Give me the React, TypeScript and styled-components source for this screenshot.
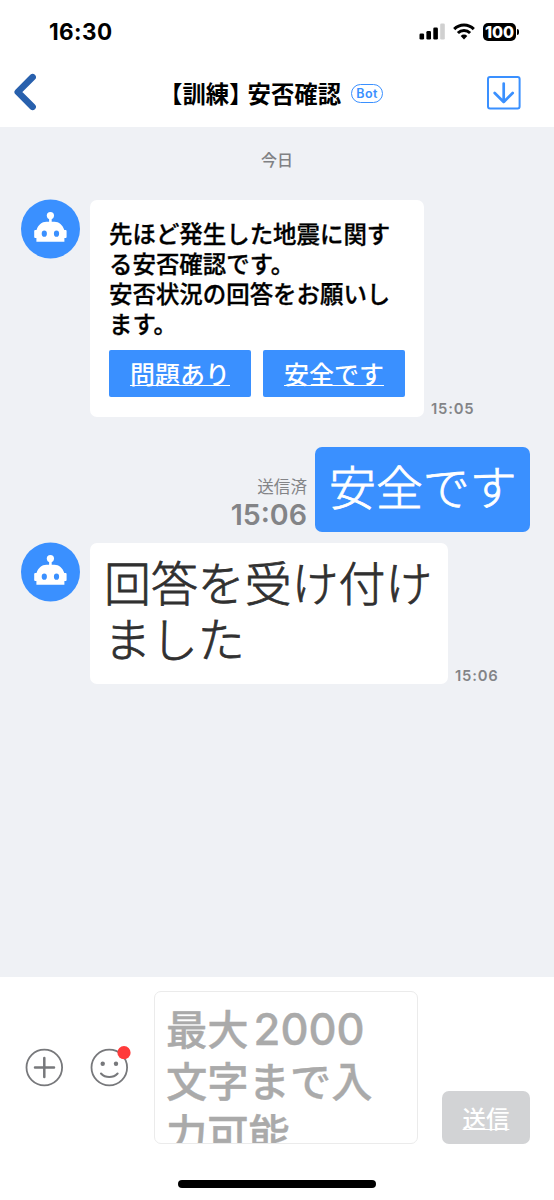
import React from "react";
import styled, { createGlobalStyle } from "styled-components";

const GlobalStyle = createGlobalStyle`
  * { box-sizing: border-box; }
  body {
    margin: 0;
    background: #fff;
    font-family: Inter, "Noto Sans CJK JP", sans-serif;
    color: #000;
  }
`;

const BLUE = "#3a90ff";

const Screen = styled.div`
  width: 554px;
  height: 1200px;
  display: flex;
  flex-direction: column;
  overflow: hidden;
  background: #fff;
`;

const StatusBar = styled.div`
  height: 61px;
  flex: none;
  display: flex;
  justify-content: space-between;
  align-items: center;
  padding: 2px 35px 0 49px;
`;

const Clock = styled.div`
  font-size: 22.5px;
  font-weight: 700;
  line-height: 24px;
  letter-spacing: 0.4px;
`;

const StatusIcons = styled.div`
  display: flex;
  align-items: center;
  gap: 8px;
  height: 20px;
`;

const Battery = styled.div`
  display: flex;
  align-items: center;
  gap: 1px;
  &::after {
    content: "";
    width: 2px;
    height: 6px;
    border-radius: 0 2px 2px 0;
    background: #000;
  }
`;

const BatteryLevel = styled.span`
  width: 33px;
  height: 18px;
  border-radius: 5px;
  background: #000;
  color: #fff;
  font-size: 16px;
  font-weight: 800;
  line-height: 18px;
  text-align: center;
`;

const Header = styled.header`
  height: 66px;
  flex: none;
  display: grid;
  grid-template-columns: 159px 1fr 67px;
  align-items: center;
  padding-bottom: 2px;
`;

const BackButton = styled.button`
  border: 0;
  padding: 0 0 3px 13px;
  background: none;
  display: flex;
`;

const SaveButton = styled.button`
  border: 0;
  padding: 0;
  background: none;
  display: flex;
`;

const Title = styled.h1`
  margin: 0;
  display: flex;
  align-items: center;
  font-size: 23.4px;
  line-height: 34px;
  font-weight: 700;
  white-space: nowrap;
`;

const TitleText = styled.span`
  padding-top: 3px;
`;

const Tag = styled.span`
  margin-right: -5px;
`;

const BotBadge = styled.span`
  margin-left: 10px;
  width: 32px;
  height: 19px;
  border: 1.3px solid ${BLUE};
  border-radius: 10px;
  color: ${BLUE};
  font-size: 12.5px;
  font-weight: 600;
  line-height: 17px;
  text-align: center;
  letter-spacing: 0.5px;
`;

const Chat = styled.main`
  height: 850px;
  flex: none;
  background: #eff1f5;
  display: flex;
  flex-direction: column;
`;

const DateLabel = styled.div`
  height: 73px;
  padding-top: 21px;
  text-align: center;
  font-size: 16px;
  line-height: 24px;
  font-weight: 500;
  color: #808184;
`;

const Row = styled.section<{ $mine?: boolean; $gap?: number }>`
  display: flex;
  align-items: flex-end;
  justify-content: ${(p) => (p.$mine ? "flex-end" : "flex-start")};
  padding: 0 24px 0 21px;
  margin-bottom: ${(p) => p.$gap ?? 0}px;
`;

const Avatar = styled.div`
  align-self: flex-start;
  width: 59px;
  height: 59px;
  margin-right: 10px;
  border-radius: 50%;
  background: ${BLUE};
  flex: none;
  transform: translateY(-0.6px);
`;

const Card = styled.div`
  width: 334px;
  height: 217px;
  padding: 20px 19px 0 19px;
  border-radius: 7px;
  background: #fff;
`;

const CardText = styled.p`
  margin: 0;
  font-size: 23.45px;
  line-height: 30px;
  font-weight: 500;
  white-space: nowrap;
  -webkit-text-stroke: 0.3px currentColor;
`;

const Actions = styled.div`
  display: flex;
  gap: 12px;
  margin-top: 10px;
`;

const Action = styled.button`
  flex: 1;
  height: 47px;
  padding: 0;
  border: 0;
  border-radius: 2px;
  background: ${BLUE};
  color: #fff;
  font-family: inherit;
  font-size: 25px;
  line-height: 50px;
  font-weight: 500;
  text-decoration: underline;
  text-decoration-thickness: 1.3px;
  text-underline-offset: 1px;
  text-decoration-skip-ink: none;
`;

const Bubble = styled.div<{ $mine?: boolean }>`
  width: ${(p) => (p.$mine ? 215 : 358)}px;
  height: ${(p) => (p.$mine ? 85 : 141)}px;
  padding: 13px 14px;
  border-radius: 7px;
  background: ${(p) => (p.$mine ? BLUE : "#fff")};
  color: ${(p) => (p.$mine ? "#fff" : "#303030")};
  font-size: 46.9px;
  line-height: 56px;
  font-weight: 300;
  white-space: nowrap;
  -webkit-text-stroke: 0.8px currentColor;
`;

const Time = styled.time`
  margin-left: 7px;
  font-size: 14.8px;
  line-height: 15px;
  font-weight: 600;
  letter-spacing: 0.8px;
  color: #838487;
`;

const SentInfo = styled.div`
  margin-right: 8px;
  text-align: right;
  color: #838487;
`;

const SentLabel = styled.div`
  font-size: 16.6px;
  line-height: 21px;
`;

const SentTime = styled.time`
  display: block;
  font-size: 28.6px;
  line-height: 34px;
  font-weight: 600;
`;

const Composer = styled.footer`
  height: 200px;
  flex: none;
  display: flex;
  align-items: flex-start;
  padding: 14px 24px 0 25px;
`;

const Tool = styled.button`
  border: 0;
  padding: 0;
  margin: 54px 22px 0 0;
  background: none;
  display: flex;
`;

const Input = styled.div`
  width: 264px;
  height: 153px;
  margin-left: auto;
  padding: 12px 0 0 11px;
  border: 1px solid #ebebeb;
  border-radius: 7px;
  overflow: hidden;
  color: #aaa;
  font-size: 41.3px;
  line-height: 52px;
  font-weight: 500;
  white-space: nowrap;
  -webkit-text-stroke: 0.4px currentColor;
`;

const Digits = styled.span`
  margin-left: 5px;
  font-size: 43.5px;
  line-height: 1;
  font-weight: 500;
`;

const Send = styled.button`
  width: 88px;
  height: 53px;
  margin: 100px 0 0 24px;
  padding: 0;
  border: 0;
  border-radius: 7px;
  background: #d2d3d5;
  color: #fff;
  font-family: inherit;
  font-size: 23.4px;
  line-height: 58px;
  font-weight: 500;
  text-decoration: underline;
  text-decoration-thickness: 1.3px;
  text-underline-offset: 1px;
  text-decoration-skip-ink: none;
`;

const HomeIndicator = styled.div`
  width: 198px;
  height: 8px;
  margin: 3px 0 0 178px;
  border-radius: 4px;
  background: #000;
`;

const Robot = () => (
  <Avatar>
    <svg width="59" height="59" viewBox="0 0 59 59" fill="#fff">
      <circle cx="29.4" cy="16.2" r="3.6" />
      <path d="M28.1 18h2.6v5h-2.6z" />
      <path
        fillRule="evenodd"
        d="M15.4 42.4V38.6h-1.2q-1-.1-1-1V31.7q0-.9 1-1h1.3C17.1 25.6 20.8 22.4 25.4 22.4h8c4.6 0 8.3 3.2 9.900 8.300h1.300q1 .1 1 1v5.900q0 .9-1 1h-1.200v3.800zM23.300 31.200a2.600 3.100 0 1 0 0 6.200a2.600 3.100 0 1 0 0-6.200zM35.500 31.200a2.600 3.100 0 1 0 0 6.200a2.600 3.100 0 1 0 0-6.200z"
      />
    </svg>
  </Avatar>
);

const Signal = () => (
  <svg width="26" height="17" viewBox="0 0 26 17">
    <rect x="0.5" y="10.5" width="4.6" height="6" rx="1.3" />
    <rect x="7.4" y="8" width="4.6" height="8.5" rx="1.3" />
    <rect x="14.3" y="4.5" width="4.6" height="12" rx="1.3" />
    <rect x="21.2" y="0.5" width="4.6" height="16" rx="1.3" fill="#d0d0d0" />
  </svg>
);

const Wifi = () => (
  <svg width="22" height="17" viewBox="0 0 22 17" fill="none" stroke="#000" strokeWidth="3">
    <path d="M1.2 6.1a13.8 13.8 0 0 1 19.6 0" />
    <path d="M4.9 10a8.6 8.6 0 0 1 12.2 0" />
    <path d="M7.7 12.9a4.7 4.7 0 0 1 6.6 0L11 16.5z" fill="#000" stroke="none" />
  </svg>
);

export default function App() {
  return (
    <Screen>
      <GlobalStyle />
      <StatusBar>
        <Clock>16:30</Clock>
        <StatusIcons>
          <Signal />
          <Wifi />
          <Battery>
            <BatteryLevel>100</BatteryLevel>
          </Battery>
        </StatusIcons>
      </StatusBar>
      <Header>
        <BackButton aria-label="戻る">
          <svg width="24" height="38" viewBox="0 0 24 38" fill="none" stroke="#2860ad" strokeWidth="6.6" strokeLinecap="round" strokeLinejoin="round">
            <path d="M19.6 4.200L4.800 19L19.6 33.800" />
          </svg>
        </BackButton>
        <Title>
          <TitleText>
            <Tag>【訓練】</Tag>
            <span>安否確認</span>
          </TitleText>
          <BotBadge>Bot</BotBadge>
        </Title>
        <SaveButton aria-label="保存">
          <svg width="34" height="34" viewBox="0 0 34 34" fill="none" stroke={BLUE} strokeWidth="2">
            <rect x="1" y="1" width="31.6" height="31.6" rx="2" />
            <path d="M16.7 7.5V26M7.7 17L16.7 26L25.7 17" strokeWidth="2.7" strokeLinecap="round" strokeLinejoin="round" />
          </svg>
        </SaveButton>
      </Header>
      <Chat>
        <DateLabel>今日</DateLabel>
        <Row $gap={30}>
          <Robot />
          <Card>
            <CardText>
              先ほど発生した地震に関す
              <br />
              る安否確認です。
              <br />
              安否状況の回答をお願いし
              <br />
              ます。
            </CardText>
            <Actions>
              <Action>問題あり</Action>
              <Action>安全です</Action>
            </Actions>
          </Card>
          <Time>15:05</Time>
        </Row>
        <Row $mine $gap={11}>
          <SentInfo>
            <SentLabel>送信済</SentLabel>
            <SentTime>15:06</SentTime>
          </SentInfo>
          <Bubble $mine>安全です</Bubble>
        </Row>
        <Row>
          <Robot />
          <Bubble>
            回答を受け付け
            <br />
            ました
          </Bubble>
          <Time>15:06</Time>
        </Row>
      </Chat>
      <Composer>
        <Tool aria-label="追加">
          <svg width="38" height="44" viewBox="0 0 38 44" fill="none" stroke="#77787b" strokeLinecap="round">
            <circle cx="19.3" cy="22.5" r="17.8" strokeWidth="1.8" />
            <path d="M10 22.5h19M19.3 13v19" strokeWidth="2.5" />
          </svg>
        </Tool>
        <Tool aria-label="スタンプ">
          <svg width="46" height="44" viewBox="0 0 46 44">
            <circle cx="24.3" cy="22.5" r="17.8" fill="none" stroke="#77787b" strokeWidth="1.8" />
            <circle cx="17.7" cy="18.8" r="2.2" fill="#77787b" />
            <circle cx="31" cy="18.8" r="2.2" fill="#77787b" />
            <path d="M16 28.5c4.5 4.7 12.1 4.7 16.6 0" fill="none" stroke="#77787b" strokeWidth="2.1" strokeLinecap="round" />
            <circle cx="39" cy="7.7" r="6.6" fill="#ff3b3b" />
          </svg>
        </Tool>
        <Input>
          最大<Digits>2000</Digits>
          <br />
          文字まで入
          <br />
          力可能
        </Input>
        <Send>送信</Send>
      </Composer>
      <HomeIndicator />
    </Screen>
  );
}
